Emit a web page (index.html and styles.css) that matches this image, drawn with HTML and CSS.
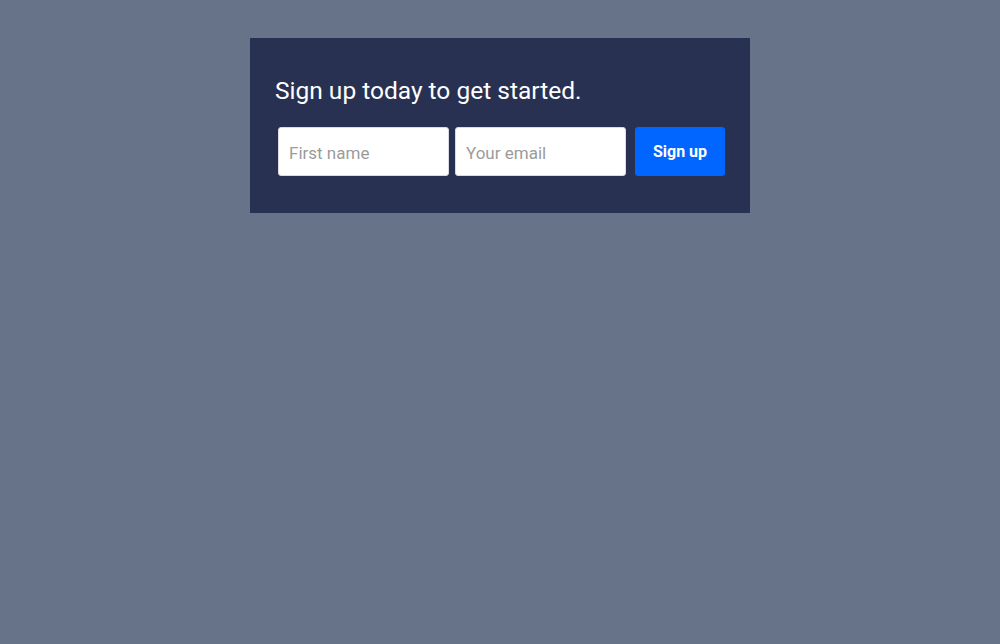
FILE: index.html
```html
<!DOCTYPE html>
<html lang="en">
<head>
<meta charset="utf-8">
<title>Sign up</title>
<link rel="stylesheet" href="styles.css">
</head>
<body>
<main class="page">
  <section class="card">
    <h1 class="title">Sign up today to get started.</h1>
    <form class="form">
      <input class="field" type="text" placeholder="First name">
      <input class="field" type="email" placeholder="Your email">
      <button class="btn" type="button">Sign up</button>
    </form>
  </section>
</main>
</body>
</html>
```
FILE: styles.css
```css
* { box-sizing: border-box; }
html, body { margin: 0; padding: 0; }
body {
  background: #667389;
  font-family: Roboto, "Liberation Sans", sans-serif;
  height: 644px;
}
.page {
  display: flex;
  justify-content: center;
  padding-top: 38px;
}
.card {
  width: 500px;
  background: #283152;
  padding: 39px 25px 37px;
}
.title {
  margin: 0 0 22px;
  font-weight: 400;
  font-size: 24.5px;
  line-height: 28px;
  color: #ffffff;
}
.form {
  display: flex;
  align-items: center;
}
.field {
  width: 171px;
  height: 49px;
  margin: 0 3px;
  border: 1px solid #d8dbe2;
  border-radius: 3px;
  background: #fff;
  padding: 2px 10px 0;
  font-family: Roboto, "Liberation Sans", sans-serif;
  font-size: 17px;
  color: #333;
}
.field::placeholder { color: #9b9b9b; }
.btn {
  margin-left: 6px;
  width: 90px;
  height: 49px;
  border: none;
  border-radius: 3px;
  background: #0066ff;
  color: #fff;
  font-family: Roboto, "Liberation Sans", sans-serif;
  font-weight: 700;
  font-size: 16px;
  padding: 0;
}
```
